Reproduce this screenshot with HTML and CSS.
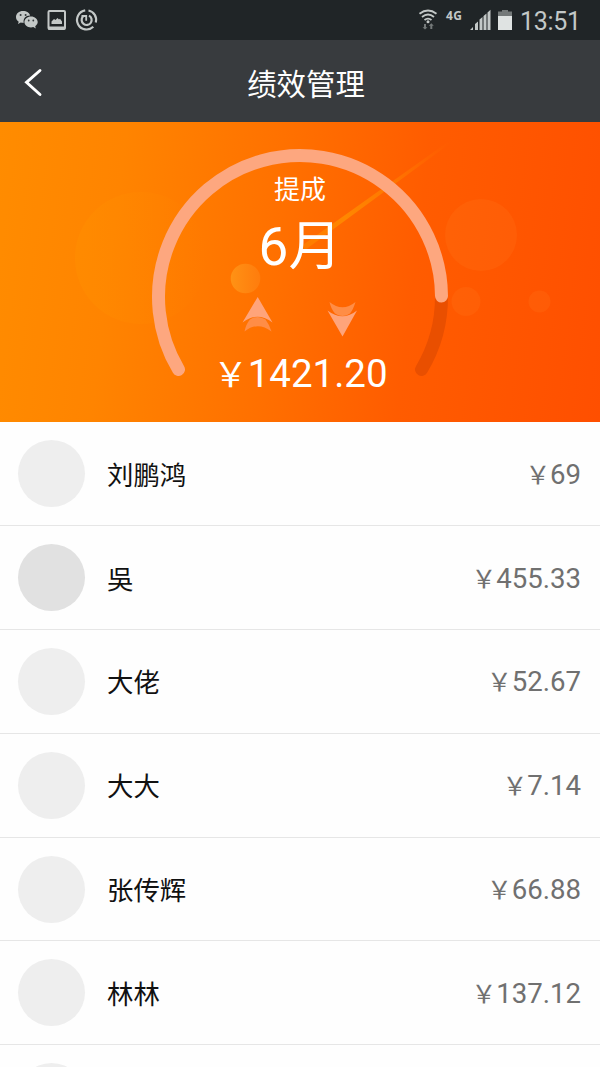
FILE: index.html
```html
<!DOCTYPE html>
<html lang="zh-CN">
<head>
<meta charset="utf-8">
<title>绩效管理</title>
<link rel="stylesheet" href="styles.css">
</head>
<body>
<div class="screen">
  <div class="statusbar">
    <svg class="status-icons" width="100" height="40" viewBox="0 0 100 40">
      <g fill="#c3c8c7">
        <path d="M23 11c-4 0-7 2.600-7 6 0 2 1 3.700 2.700 4.800L18 24l2.800-1.400c1 .2 2 .3 3 .2-1-4 2-7.300 6.400-7.200C29.600 12.900 26.700 11 23 11z"/>
        <path d="M31 16.500c-3.800 0-6.600 2.500-6.600 5.500s2.800 5.400 6.600 5.400c.8 0 1.600-.1 2.300-.3l2.500 1.500-.6-2.400c1.500-1 2.500-2.500 2.500-4.200 0-3-2.900-5.500-6.700-5.500z"/>
      </g>
      <g fill="#34393a"><circle cx="20.600" cy="15" r="1"/><circle cx="25.600" cy="15" r="1"/><circle cx="28.700" cy="20.500" r=".9"/><circle cx="33.300" cy="20.500" r=".9"/></g>
      <rect x="48.500" y="11" width="16.500" height="18" rx="1" fill="none" stroke="#c3c8c7" stroke-width="2"/>
      <path d="M48 26.500h17v3H48zM51.500 24v-2.500l2.500-2.500 1.500 1 2-2 1.500 1.500 1-.7 2 2.700V24z" fill="#c3c8c7"/>
      <g fill="none" stroke="#c3c8c7" stroke-width="2.200">
        <path d="M85.200 10.400A9.600 9.600 0 1 0 93.300 26.800"/>
        <path d="M88.500 10.500A9.600 9.600 0 0 1 95.800 22.500"/>
        <path d="M89 15.600A5 5 0 1 1 83 16.600"/>
        <path d="M81.500 16h4.700v4.700" stroke-width="1.800"/>
      </g>
    </svg>
    <div class="status-right">
      <svg width="26" height="40" viewBox="0 0 26 40">
        <g fill="none" stroke="#c3c8c7" stroke-width="1.900">
          <path d="M5.500 13.800q8.500-6.500 17 0M8 16.900q6-4.800 12 0M10.500 19.900q3.500-2.600 7 0"/>
        </g>
        <circle cx="14" cy="21.800" r="1.500" fill="#c3c8c7"/>
        <path d="M11 29.500l-2.500-2.300h1.500V24h2v3.200h1.500zM17.300 23.300l2.500 2.500h-1.500V29h-2v-3.200h-1.500z" fill="#747979"/>
      </svg>
      <span class="network">4G</span>
      <svg class="signal" width="22" height="40" viewBox="0 0 22 40">
        <path d="M0 30l3-3v3zM5 30v-6l3-2.500V30zM9.500 30V19.500l3-2.500v13zM13.500 30V16l3-2.500V30zM17.500 30V12.500l3-2.700V30z" fill="#c3c8c7"/>
      </svg>
      <svg class="battery" width="14" height="40" viewBox="0 0 14 40">
        <path d="M0 11.500h4v-1.500h6v1.500h4V16H0z" fill="#747979"/><path d="M0 16h14v14H0z" fill="#dfe3e2"/>
      </svg>
      <span class="clock">13:51</span>
    </div>
  </div>
  <div class="navbar">
    <svg class="back" width="20" height="30" viewBox="0 0 20 30"><path d="M17 3.500L3.500 15.300 17 27.500" fill="none" stroke="#fff" stroke-width="2.900" stroke-linecap="round"/></svg>
    <span class="title">绩效管理</span>
  </div>
  <div class="hero">
    <svg class="hero-art" width="600" height="300" viewBox="0 122 600 300">
      <defs>
        <linearGradient id="bubble"><stop offset="0" stop-color="#ff9100" stop-opacity=".4"/><stop offset="1" stop-color="#ff8a00" stop-opacity="0"/></linearGradient>
        <linearGradient id="dot"><stop offset="0" stop-color="#ff9416" stop-opacity=".95"/><stop offset="1" stop-color="#ff8112" stop-opacity=".7"/></linearGradient>
        <linearGradient id="ray" gradientUnits="userSpaceOnUse" x1="300" y1="250" x2="450" y2="140"><stop offset="0" stop-color="#ff8a00" stop-opacity=".5"/><stop offset=".3" stop-color="#ff8700"/><stop offset=".6" stop-color="#ff8000" stop-opacity=".7"/><stop offset="1" stop-color="#ff7000" stop-opacity="0"/></linearGradient>
      </defs>
      <circle cx="141" cy="258" r="66" fill="url(#bubble)"/>
      <circle cx="245.500" cy="278.500" r="14.800" fill="url(#dot)"/>
      <circle cx="481" cy="235" r="36" fill="#ff7b1c" fill-opacity=".2"/>
      <circle cx="466" cy="301.500" r="14.500" fill="#ff7b1c" fill-opacity=".2"/>
      <circle cx="539.500" cy="301.500" r="11" fill="#ff7b1c" fill-opacity=".22"/>
      <path d="M300 247L447 142.500 452 142 305 250z" fill="url(#ray)"/>
      <g fill="none" stroke-width="13" stroke-linecap="round">
        <path d="M441.500 296A141.500 141.500 0 0 1 421.500 369.500" stroke="#e94f00"/>
        <path d="M178.500 369.500A141.500 141.500 0 1 1 441.500 296" stroke="#fda77f"/>
      </g>
      <path d="M244.500 331.500Q246 324 250 319.500Q257.700 314.500 265.500 319.500Q269 324 271.500 331.500Q257.700 321 244.500 331.500z" fill="#ff8d46"/>
      <path d="M257.700 297L272.500 322.500Q257.700 311 242.500 322.500z" fill="#ffa47a"/>
      <path d="M329.500 302Q342.500 312.500 355.500 302Q353 310 350 313.500Q342.500 318.500 335 313.500Q331 309 329.500 302z" fill="#ff8d46"/>
      <path d="M342.500 336.500L357 310.500Q342.500 322 327.500 310.500z" fill="#ffa47a"/>
    </svg>
    <div class="hero-text">
      <div class="label">提成</div>
      <div class="month">6月</div>
      <div class="total"><span class="yen">￥</span>1421.20</div>
    </div>
  </div>
  <div class="list">
    <div class="row"><span class="avatar"></span><span class="name">刘鹏鸿</span><span class="amount"><span class="yen">￥</span>69</span></div>
    <div class="row"><span class="avatar darker"></span><span class="name">吳</span><span class="amount"><span class="yen">￥</span>455.33</span></div>
    <div class="row"><span class="avatar"></span><span class="name">大佬</span><span class="amount"><span class="yen">￥</span>52.67</span></div>
    <div class="row"><span class="avatar"></span><span class="name">大大</span><span class="amount"><span class="yen">￥</span>7.14</span></div>
    <div class="row"><span class="avatar"></span><span class="name">张传辉</span><span class="amount"><span class="yen">￥</span>66.88</span></div>
    <div class="row"><span class="avatar"></span><span class="name">林林</span><span class="amount"><span class="yen">￥</span>137.12</span></div>
    <div class="row"><span class="avatar"></span></div>
  </div>
</div>
</body>
</html>
```
FILE: styles.css
```css
* { box-sizing: border-box; }
body {
  margin: 0;
  font-family: Roboto, "Noto Sans CJK SC", sans-serif;
}
svg { display: block; flex: none; }
.screen {
  width: 600px;
  height: 1067px;
  overflow: hidden;
  background: #fefefe;
  display: flex;
  flex-direction: column;
}
.statusbar {
  flex: none;
  height: 40px;
  background: #202527;
  display: flex;
  justify-content: space-between;
  color: #c3c8c7;
}
.status-right {
  display: flex;
  padding-right: 19px;
}
.network {
  margin-left: 6px;
  width: 24px;
  font: 700 12px/31px "Open Sans", sans-serif;
  letter-spacing: .3px;
}
.signal { margin-right: 6px; }
.battery { margin-right: 8px; }
.clock {
  width: 61px;
  font-size: 25px;
  line-height: 43px;
  letter-spacing: -.3px;
}
.navbar {
  flex: none;
  height: 82px;
  background: #383b3e;
  display: grid;
  grid-template-columns: 100px 1fr 100px;
  align-items: center;
}
.back { margin: 1px 0 0 23px; }
.title {
  color: #fff;
  font-size: 29.4px;
  line-height: 40px;
  text-align: center;
  margin: 7px 0 0 12px;
}
.hero {
  flex: none;
  height: 299.5px;
  display: grid;
  background: linear-gradient(97deg, #ff8c00 0%, #ff8400 20%, #ff7000 46%, #ff5c00 68%, #ff4f00 100%);
  color: #fff;
}
.hero-art, .hero-text { grid-area: 1 / 1; }
.hero-text {
  display: flex;
  flex-direction: column;
  align-items: center;
}
.label {
  margin-top: 49px;
  font-size: 26px;
  line-height: 38px;
}
.month {
  font-size: 53px;
  line-height: 70px;
  margin-top: 3px;
}
.total {
  margin: 66px 0 0 1px;
  font-size: 38.5px;
  line-height: 52px;
}
.yen {
  font-size: .9em;
  letter-spacing: -.01em;
}
.list {
  flex: none;
  padding-top: 1px;
}
.row {
  height: 103.8px;
  border-bottom: 1px solid #e6e6e6;
  padding: 0 19px 0 18px;
  display: flex;
  align-items: center;
}
.avatar {
  width: 67px;
  height: 67px;
  border-radius: 50%;
  background: #eee;
  flex: none;
}
.avatar.darker { background: #e1e1e1; }
.name {
  margin: 4px 0 0 22px;
  font-size: 26.4px;
  line-height: 40px;
  color: #111;
}
.amount {
  margin: 3px 0 0 auto;
  font-size: 27.6px;
  line-height: 40px;
  color: #707070;
}
```
